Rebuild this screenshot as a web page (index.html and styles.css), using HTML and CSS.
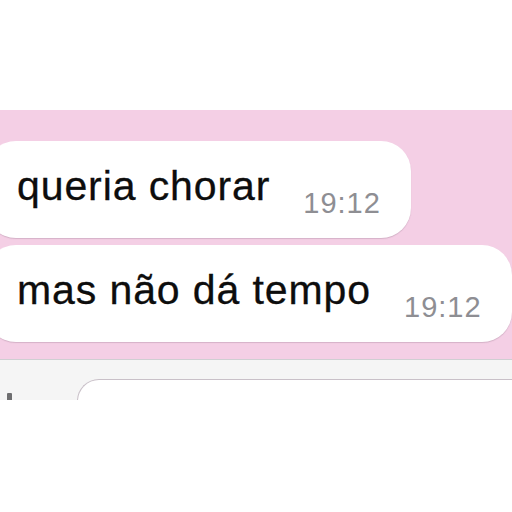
FILE: index.html
```html
<!DOCTYPE html>
<html lang="pt">
<head>
    <meta charset="UTF-8">
    <meta name="viewport" content="width=device-width, initial-scale=1.0">
    <title>Conversa</title>
    <link rel="stylesheet" href="styles.css">
</head>
<body>
    <div class="top-space"></div>

    <div class="chat">
        <div class="bubble">
            <span class="msg">queria chorar</span>
            <span class="time">19:12</span>
        </div>
        <div class="bubble">
            <span class="msg">mas não dá tempo</span>
            <span class="time">19:12</span>
        </div>
    </div>

    <div class="input-bar">
        <div class="icon"></div>
        <div class="input-box"></div>
    </div>
</body>
</html>
```

FILE: styles.css
```css
* {
    box-sizing: border-box;
    margin: 0;
    padding: 0;
}

body {
    font-family: 'Liberation Sans', Arial, sans-serif;
    background: white;
    width: 512px;
    height: 512px;
    overflow: hidden;
}

.top-space {
    height: 110px;
}

.chat {
    background: #f4cfe5;
    height: 249px;
    padding-top: 31px;
    display: flex;
    flex-direction: column;
    align-items: flex-start;
    gap: 7px;
}

.bubble {
    display: flex;
    align-items: flex-end;
    flex-shrink: 0;
    white-space: nowrap;
    margin-left: -14px;
    padding: 22px 30px 19px 31px;
    background: white;
    border-radius: 30px;
    box-shadow: 0 1px 1px rgba(120, 90, 110, 0.25);
}

.msg {
    font-size: 41px;
    line-height: 46px;
    letter-spacing: 0.9px;
    color: #0d0d0d;
    margin-bottom: 10px;
    -webkit-text-stroke: 0.3px #0d0d0d;
}

.time {
    font-size: 29px;
    line-height: 32px;
    letter-spacing: 1px;
    color: #8e8e93;
    margin-left: 33px;
}

.input-bar {
    height: 41px;
    background: #f5f5f5;
    border-top: 1px solid #cfcfd2;
    display: flex;
    align-items: flex-start;
    padding-top: 19px;
    overflow: hidden;
}

.icon {
    width: 5px;
    height: 8px;
    margin: 14px 0 0 7px;
    background: #6e6e70;
    border-radius: 1px;
}

.input-box {
    margin-left: 65px;
    flex: 1;
    height: 44px;
    background: white;
    border: 1px solid #c9c0c8;
    border-right: none;
    border-radius: 22px 0 0 0;
}
```
